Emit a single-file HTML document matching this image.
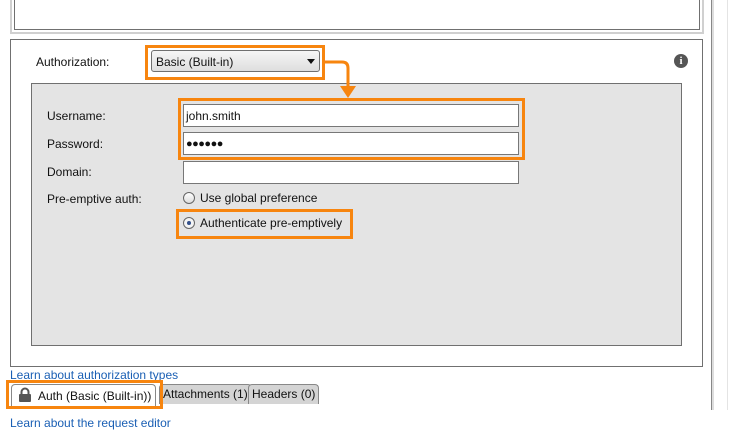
<!DOCTYPE html>
<html><head><style>
body{margin:0;width:742px;height:438px;background:#fff;position:relative;overflow:hidden;font-family:"Liberation Sans",sans-serif;font-size:12px;color:#111}
.a{position:absolute;box-sizing:border-box}
.t{position:absolute;white-space:nowrap;line-height:14px}
.or{position:absolute;box-sizing:border-box;border:3px solid #f7850f;z-index:5}
.in{position:absolute;box-sizing:border-box;background:#fff;border:1px solid #777}
.lk{position:absolute;font-family:"Liberation Sans",sans-serif;font-size:12px;color:#1a5fb4;white-space:nowrap}
.tab{position:absolute;box-sizing:border-box;border:1px solid #888;border-bottom:none;border-radius:4px 4px 0 0;background:#d4d4d4;height:20px;line-height:18px;padding:0 3px;white-space:nowrap}
</style></head><body>
<div class="a" style="left:14px;top:0;width:686px;height:30px;border:1px solid #707070;border-top:none"></div>
<div class="a" style="left:10px;top:0;width:694px;height:34px;border:2px solid #d0d0d0;border-top:none;z-index:-1"></div>
<div class="a" style="left:711px;top:0;width:1px;height:410px;background:#888"></div>
<div class="a" style="left:712px;top:0;width:2px;height:410px;background:#ddd"></div>
<div class="a" style="left:727px;top:0;width:1px;height:410px;background:#e4e4e4"></div>
<div class="a" style="left:10px;top:39px;width:693px;height:328px;border:1px solid #707070"></div>
<div class="t" style="left:36px;top:55px">Authorization:</div>
<div class="a" style="left:151px;top:50px;width:169px;height:22px;border:1px solid #707070;border-radius:3px;background:linear-gradient(#f6f6f6,#dedede)"></div>
<div class="t" style="left:156px;top:55px">Basic (Built-in)</div>
<div class="a" style="left:307px;top:59px;width:0;height:0;border-left:4px solid transparent;border-right:4px solid transparent;border-top:5px solid #111"></div>
<div class="or" style="left:145px;top:45px;width:180px;height:35px"></div>
<div class="a" style="left:674px;top:54px;width:14px;height:14px;border-radius:50%;background:#555;color:#fff;font:bold 11px 'Liberation Serif',serif;text-align:center;line-height:14px">i</div>
<div class="a" style="left:31px;top:83px;width:651px;height:263px;border:1px solid #707070;background:#e4e4e4"></div>
<svg class="a" style="left:320px;top:55px;z-index:6" width="50" height="46"><path d="M4 7 H22 Q28 7 28 13 V34" fill="none" stroke="#f7850f" stroke-width="3"/><path d="M20 31 L28 43 L36 31 Z" fill="#f7850f"/></svg>
<div class="t" style="left:47px;top:109px">Username:</div>
<div class="t" style="left:47px;top:137px">Password:</div>
<div class="t" style="left:47px;top:165px">Domain:</div>
<div class="t" style="left:47px;top:192px">Pre-emptive auth:</div>
<div class="in" style="left:183px;top:104px;width:336px;height:23px"></div>
<div class="t" style="left:186px;top:109px">john.smith</div>
<div class="in" style="left:183px;top:132px;width:336px;height:23px"></div>
<div class="t" style="left:186px;top:137px;letter-spacing:-0.5px;font-size:11px">●●●●●●</div>
<div class="in" style="left:183px;top:161px;width:336px;height:23px"></div>
<div class="or" style="left:178px;top:98px;width:347px;height:62px"></div>
<div class="a" style="left:183px;top:192px;width:12px;height:12px;border:1px solid #666;border-radius:50%;background:linear-gradient(#fff,#ddd)"></div>
<div class="t" style="left:200px;top:191px">Use global preference</div>
<div class="a" style="left:183px;top:217px;width:12px;height:12px;border:1px solid #666;border-radius:50%;background:#f4f4f4"></div>
<div class="a" style="left:187px;top:221px;width:4px;height:4px;border-radius:50%;background:#34508a"></div>
<div class="t" style="left:200px;top:216px">Authenticate pre-emptively</div>
<div class="or" style="left:176px;top:209px;width:177px;height:30px"></div>
<div class="lk" style="left:10px;top:368px">Learn about authorization types</div>
<div class="tab" style="left:159px;top:384px">Attachments (1)</div>
<div class="tab" style="left:248px;top:384px">Headers (0)</div>
<div class="tab" style="left:11px;top:384px;width:145px;height:22px;background:#fff;padding-left:26px;line-height:22px">Auth (Basic (Built-in))</div>
<svg class="a" style="left:18px;top:387px" width="14" height="16"><path d="M3.5 7 V5 a3.5 3.5 0 0 1 7 0 V7" fill="none" stroke="#555" stroke-width="2"/><rect x="1" y="7" width="12" height="8" rx="1" fill="#555"/></svg>
<div class="or" style="left:6px;top:380px;width:157px;height:29px"></div>
<div class="lk" style="left:10px;top:416px">Learn about the request editor</div>
</body></html>
